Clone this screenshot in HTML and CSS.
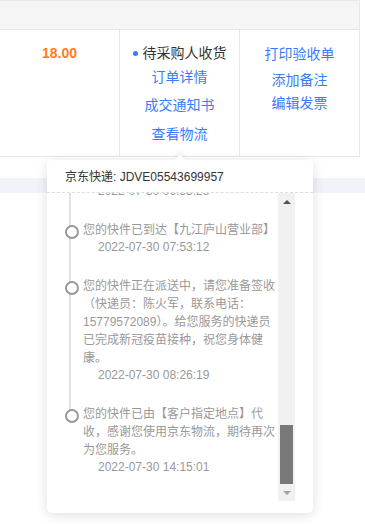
FILE: index.html
```html
<!DOCTYPE html>
<html lang="zh-CN">
<head>
    <meta charset="UTF-8">
    <meta name="viewport" content="width=device-width, initial-scale=1.0">
    <title>订单列表</title>
    <link rel="stylesheet" href="styles.css">
</head>
<body>
    <div class="page">
        <div class="order-table">
            <div class="table-head"></div>
            <div class="order-row">
                <div class="cell cell-price">
                    <span class="price">18.00</span>
                </div>
                <div class="cell cell-status">
                    <div class="status"><span class="dot"></span>待采购人收货</div>
                    <a class="link link-detail" href="#">订单详情</a>
                    <a class="link link-notice" href="#">成交通知书</a>
                    <a class="link link-logistics" href="#">查看物流</a>
                </div>
                <div class="cell cell-actions">
                    <a class="link" href="#">打印验收单</a>
                    <a class="link link-remark" href="#">添加备注</a>
                    <a class="link link-invoice" href="#">编辑发票</a>
                </div>
            </div>
        </div>

        <div class="next-order"></div>

        <!-- 物流弹窗 -->
        <div class="logistics-pop">
            <div class="pop-head">京东快递: JDVE05543699957</div>
            <div class="pop-body">
                <div class="track-list">
                    <div class="track-items">
                        <div class="track-item">
                            <p class="track-text">您的快件已从【九江中转场】发出</p>
                            <p class="track-time">2022-07-30 06:55:28</p>
                        </div>
                        <div class="track-item">
                            <p class="track-text">您的快件已到达【九江庐山营业部】</p>
                            <p class="track-time">2022-07-30 07:53:12</p>
                        </div>
                        <div class="track-item">
                            <p class="track-text">您的快件正在派送中，请您准备签收（快递员：陈火军，联系电话：15779572089）。给您服务的快递员已完成新冠疫苗接种，祝您身体健康。</p>
                            <p class="track-time">2022-07-30 08:26:19</p>
                        </div>
                        <div class="track-item">
                            <p class="track-text">您的快件已由【客户指定地点】代收，感谢您使用京东物流，期待再次为您服务。</p>
                            <p class="track-time">2022-07-30 14:15:01</p>
                        </div>
                    </div>
                </div>
                <div class="scrollbar">
                    <div class="scroll-btn"><span class="arrow-up"></span></div>
                    <div class="scroll-space"></div>
                    <div class="scroll-thumb"></div>
                    <div class="scroll-btn"><span class="arrow-down"></span></div>
                </div>
            </div>
        </div>
    </div>
</body>
</html>
```

FILE: styles.css
```css
* {
    margin: 0;
    padding: 0;
    box-sizing: border-box;
}

body {
    font-family: 'Liberation Sans', 'Noto Sans CJK SC', sans-serif;
    background: #fff;
    color: #333;
    width: 365px;
    height: 524px;
    overflow: hidden;
}

a {
    text-decoration: none;
}

.page {
    position: relative;
    height: 524px;
}

.order-table {
    width: 360px;
    border-right: 1px solid #e8e8e8;
}

.table-head {
    height: 30px;
    background: #f5f5f5;
    border-top: 1px solid #e8e8e8;
    border-bottom: 1px solid #e8e8e8;
}

.order-row {
    display: grid;
    grid-template-columns: 120px 120px 119px;
    height: 127px;
    border-bottom: 1px solid #e8e8e8;
}

.cell {
    display: flex;
    flex-direction: column;
    align-items: center;
    padding-top: 14px;
    font-size: 14px;
    line-height: 18px;
}

.cell-price,
.cell-status {
    border-right: 1px solid #e8e8e8;
}

.price {
    font-size: 14px;
    font-weight: bold;
    color: #ff7a1c;
}

.status {
    display: flex;
    align-items: center;
    color: #333;
}

.dot {
    width: 5px;
    height: 5px;
    border-radius: 50%;
    background: #3a7bfb;
    margin-right: 5px;
}

.link {
    color: #3a7bfb;
}

.link-detail {
    margin-top: 6px;
}

.link-notice {
    margin-top: 10px;
}

.link-logistics {
    margin-top: 11px;
}

.cell-actions .link:first-child {
    margin-top: 1px;
}

.link-remark {
    margin-top: 8px;
}

.link-invoice {
    margin-top: 5px;
}

.next-order {
    margin-top: 21px;
    height: 15px;
    background: #f2f3f8;
}

/* 物流弹窗 */
.logistics-pop {
    position: absolute;
    left: 47px;
    top: 160px;
    width: 266px;
    height: 353px;
    background: #fff;
    border-radius: 5px;
    box-shadow: 0 2px 12px rgba(0, 0, 0, 0.13);
    padding-bottom: 12px;
    display: flex;
    flex-direction: column;
}

.logistics-pop::before {
    content: '';
    position: absolute;
    left: 129px;
    top: -4px;
    width: 8px;
    height: 8px;
    background: #fff;
    transform: rotate(45deg);
    box-shadow: -2px -2px 4px rgba(0, 0, 0, 0.05);
}

.pop-head {
    position: relative;
    padding: 8px 18px 6px;
    font-size: 12px;
    line-height: 18px;
    color: #333;
    border-bottom: 1px dashed #ddd;
    background: #fff;
    border-radius: 5px 5px 0 0;
}

.pop-body {
    flex: 1;
    display: flex;
    padding: 0 18px;
    min-height: 0;
}

.track-list {
    flex: 1;
    overflow: hidden;
}

.track-items {
    margin-top: -28px;
}

.track-item {
    position: relative;
    padding: 0 0 22px 18px;
    font-size: 12px;
    color: #999;
}

.track-item::before {
    content: '';
    position: absolute;
    left: 4px;
    top: 0;
    bottom: 0;
    width: 2px;
    background: #e3e3e3;
}

.track-item:last-child::before {
    bottom: auto;
    height: 5px;
}

.track-item::after {
    content: '';
    position: absolute;
    left: 0;
    top: 4px;
    width: 10px;
    height: 10px;
    border: 2px solid #999;
    border-radius: 50%;
    background: #fff;
}

.track-text {
    line-height: 18px;
    width: 195px;
}

.track-time {
    line-height: 16px;
    padding-left: 15px;
}

.scrollbar {
    width: 17px;
    background: #f1f1f1;
    display: flex;
    flex-direction: column;
    align-items: center;
}

.scroll-btn {
    height: 17px;
    width: 17px;
    display: flex;
    align-items: center;
    justify-content: center;
}

.arrow-up {
    border-left: 4px solid transparent;
    border-right: 4px solid transparent;
    border-bottom: 4px solid #505050;
}

.arrow-down {
    border-left: 4px solid transparent;
    border-right: 4px solid transparent;
    border-top: 4px solid #a3a3a3;
}

.scroll-space {
    flex: 1;
}

.scroll-thumb {
    width: 13px;
    height: 59px;
    background: #787878;
}
```
